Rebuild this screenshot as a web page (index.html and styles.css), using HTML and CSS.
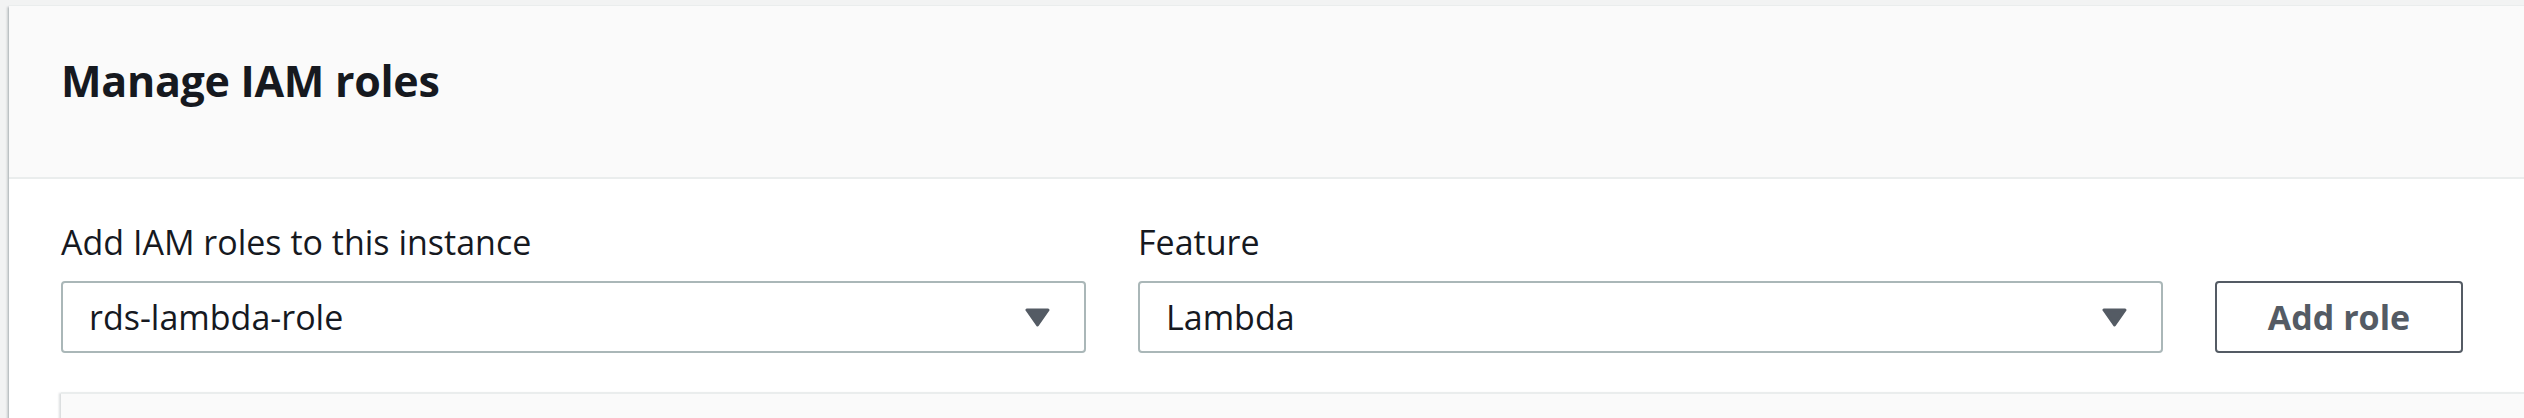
FILE: index.html
```html
<!DOCTYPE html>
<html lang="en">
<head>
<meta charset="utf-8">
<title>Manage IAM roles</title>
<link rel="stylesheet" href="styles.css">
</head>
<body>
<section class="panel">
  <header class="panel-header">
    <h2 class="panel-title">Manage IAM roles</h2>
  </header>
  <div class="panel-body">
    <div class="form-row">
      <div class="field">
        <label class="field-label">Add IAM roles to this instance</label>
        <div class="select">
          <span class="select-value">rds-lambda-role</span>
          <svg class="caret" width="25" height="19" viewBox="0 0 25 19" aria-hidden="true"><polygon points="2,2 23,2 12.5,17" fill="#545b64" stroke="#545b64" stroke-width="3" stroke-linejoin="round"/></svg>
        </div>
      </div>
      <div class="field">
        <label class="field-label">Feature</label>
        <div class="select">
          <span class="select-value">Lambda</span>
          <svg class="caret" width="25" height="19" viewBox="0 0 25 19" aria-hidden="true"><polygon points="2,2 23,2 12.5,17" fill="#545b64" stroke="#545b64" stroke-width="3" stroke-linejoin="round"/></svg>
        </div>
      </div>
      <div class="field field-action">
        <button class="btn" type="button">Add role</button>
      </div>
    </div>
    <div class="roles-box"></div>
  </div>
</section>
</body>
</html>
```

FILE: styles.css
```css
html, body {
  margin: 0;
  padding: 0;
}
body {
  background: #f2f3f3;
  font-family: "Open Sans", "Noto Sans", Arial, sans-serif;
  color: #16191f;
  height: 418px;
  overflow: hidden;
}
.panel {
  margin: 5px 0 0 9px;
  background: #ffffff;
  border-top: 1px solid #eaeded;
  box-shadow: 0 2px 2px 0 rgba(0, 28, 36, 0.3), -2px 2px 2px 0 rgba(0, 28, 36, 0.15);
  height: 412px;
  overflow: hidden;
}
.panel-header {
  background: #fafafa;
  border-bottom: 2px solid #eaeded;
  padding: 46px 61px 0 52px;
  height: 125px;
}
.panel-title {
  margin: 0;
  font-size: 43px;
  font-weight: 700;
  letter-spacing: -0.3px;
  line-height: 58px;
  color: #16191f;
}
.panel-body {
  padding: 41px 61px 0 52px;
}
.form-row {
  display: grid;
  grid-template-columns: 1fr 1fr 248px;
  column-gap: 52px;
  align-items: end;
}
.field {
  display: flex;
  flex-direction: column;
}
.field-label {
  font-size: 34px;
  line-height: 44px;
  margin-bottom: 17px;
  color: #16191f;
}
.select {
  display: flex;
  align-items: center;
  justify-content: space-between;
  height: 72px;
  box-sizing: border-box;
  border: 2px solid #aab7b8;
  border-radius: 4px;
  background: #ffffff;
  padding: 0 34px 0 26px;
}
.select-value {
  font-size: 34px;
  line-height: 68px;
  color: #16191f;
}
.caret {
  display: block;
}
.btn {
  height: 72px;
  box-sizing: border-box;
  border: 2px solid #545b64;
  border-radius: 4px;
  background: #ffffff;
  color: #545b64;
  font-family: "Open Sans", "Noto Sans", Arial, sans-serif;
  font-size: 34px;
  font-weight: 700;
  line-height: 68px;
  padding: 0;
}
.roles-box {
  margin-top: 39px;
  margin-right: -61px;
  height: 40px;
  background: #fafafa;
  border-top: 2px solid #eaeded;
  box-shadow: -3px 0 2px -1px rgba(0, 28, 36, 0.15);
}
```
